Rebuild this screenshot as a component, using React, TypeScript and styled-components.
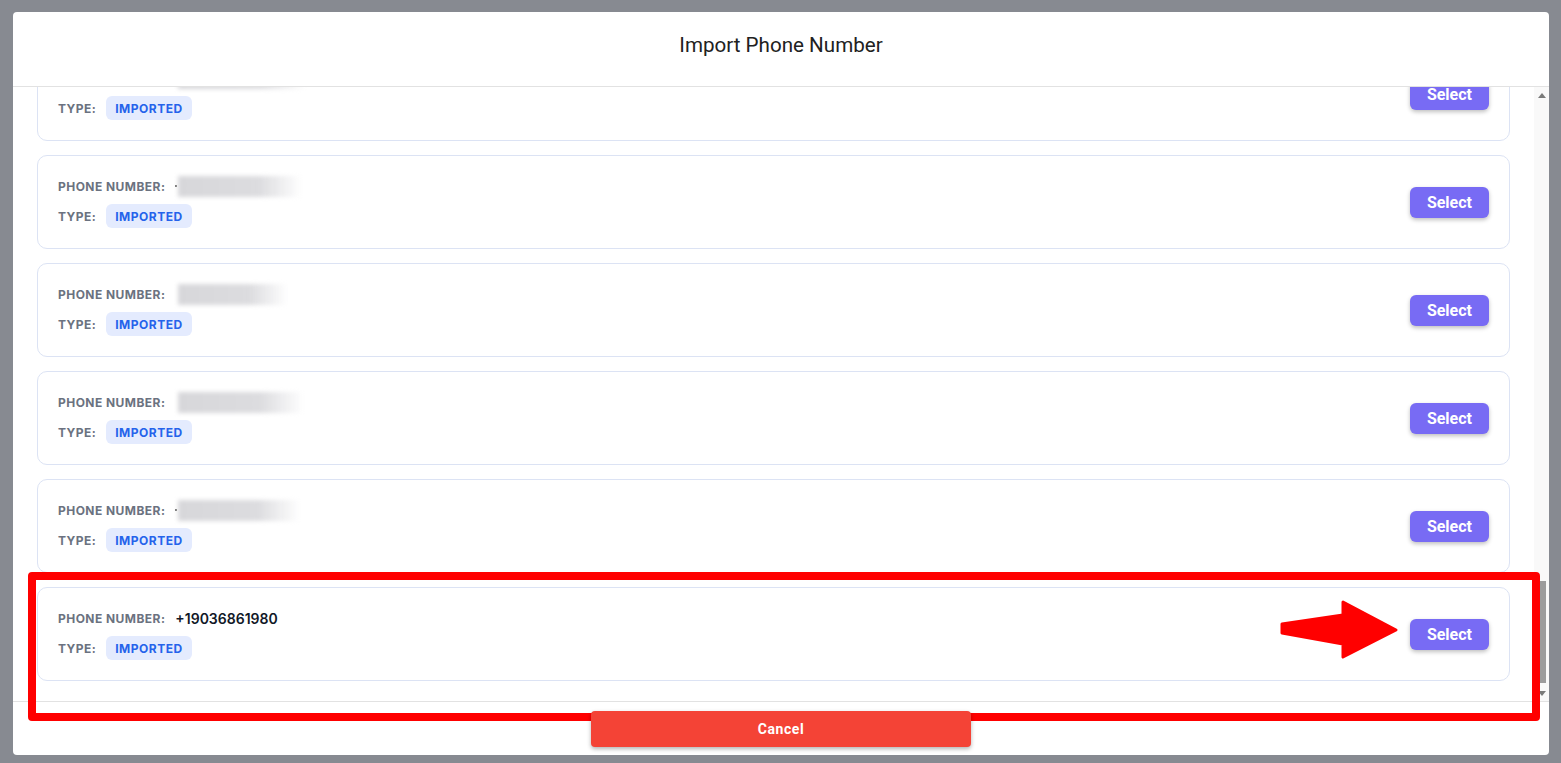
import React, { useLayoutEffect, useRef } from "react";
import styled, { createGlobalStyle } from "styled-components";

type PhoneItem = {
  id: number;
  number?: string;
  blurWidth: number;
};

const blurWidths = [124, 112, 128, 123, 118, 126, 110, 121];

const items: PhoneItem[] = Array.from({ length: 32 }, (_, i) => ({
  id: i,
  blurWidth: blurWidths[i % blurWidths.length],
}));
items[items.length - 5] = { id: 95, blurWidth: 124 };
items[items.length - 4] = { id: 96, blurWidth: 110 };
items[items.length - 3] = { id: 97, blurWidth: 126 };
items[items.length - 2] = { id: 98, blurWidth: 122 };
items[items.length - 1] = { id: 99, number: "+19036861980", blurWidth: 0 };

const GlobalStyle = createGlobalStyle`
  html, body {
    margin: 0;
    background: #878a91;
  }
  body {
    box-sizing: border-box;
    height: 763px;
    padding: 12px 12px 8px 13px;
    overflow: hidden;
    font-family: Roboto, "Liberation Sans", Arial, sans-serif;
  }
  * {
    box-sizing: border-box;
  }
`;

const Modal = styled.div`
  position: relative;
  height: 743px;
  display: flex;
  flex-direction: column;
  background: #ffffff;
  border-radius: 4px;
`;

const Header = styled.div`
  flex: 0 0 75px;
  display: flex;
  align-items: center;
  justify-content: center;
  padding-bottom: 8px;
  border-bottom: 1px solid #e2e2e2;
  h2 {
    margin: 0;
    font-family: Roboto, "Liberation Sans", sans-serif;
    font-size: 20.6px;
    font-weight: 400;
    color: #212121;
  }
`;

const Body = styled.div`
  flex: 1;
  min-height: 0;
  display: flex;
`;

const List = styled.div`
  flex: 1;
  overflow-y: scroll;
  padding: 20px 24px;
  display: flex;
  flex-direction: column;
  gap: 14px;
  scrollbar-width: none;
  &::-webkit-scrollbar {
    display: none;
  }
`;

const ScrollBar = styled.div`
  flex: 0 0 15px;
  display: flex;
  flex-direction: column;
  background: #f9f9f9;
`;

const ScrollArrow = styled.div<{ $dir: "up" | "down" }>`
  flex: 0 0 15px;
  display: flex;
  align-items: center;
  justify-content: center;
  &::after {
    content: "";
    width: 0;
    height: 0;
    border-left: 4px solid transparent;
    border-right: 4px solid transparent;
    ${(p) =>
      p.$dir === "up"
        ? "border-bottom: 5px solid #7a7a7a; margin-top: 1px;"
        : "border-top: 5px solid #7a7a7a;"}
  }
`;

const Track = styled.div`
  flex: 1;
  display: flex;
  flex-direction: column;
  justify-content: flex-end;
  padding: 0 3px 3px 2px;
`;

const Thumb = styled.div`
  height: 102px;
  background: #9c9c9c;
`;

const Card = styled.div`
  flex: 0 0 auto;
  display: flex;
  align-items: center;
  justify-content: space-between;
  padding: 20px;
  border: 1px solid #dce3f4;
  border-radius: 10px;
  background: #ffffff;
`;

const Info = styled.div`
  display: flex;
  flex-direction: column;
  gap: 8px;
  font-family: Inter, "Noto Sans", sans-serif;
`;

const Row = styled.div<{ $h: number }>`
  display: flex;
  align-items: center;
  gap: 10px;
  height: ${(p) => p.$h}px;
`;

const Label = styled.span`
  font-size: 12px;
  font-weight: 700;
  letter-spacing: 0.45px;
  text-transform: uppercase;
  color: #6b7280;
`;

const Value = styled.span`
  font-size: 14px;
  font-weight: 600;
  color: #111827;
`;

const Hidden = styled.span<{ $w: number; $dot: boolean }>`
  display: inline-flex;
  align-items: center;
  gap: 1px;
  height: 20px;
  &::before {
    content: "";
    width: 2px;
    height: 2px;
    border-radius: 50%;
    background: ${(p) => (p.$dot ? "#444" : "transparent")};
  }
  &::after {
    content: "";
    width: ${(p) => p.$w}px;
    height: 21px;
    background: linear-gradient(90deg, #d7d7da 0%, #dcdcdf 65%, rgba(255, 255, 255, 0) 100%);
    filter: blur(2px);
  }
`;

const Badge = styled.span`
  display: inline-flex;
  align-items: center;
  height: 24px;
  padding: 0 9px;
  border-radius: 6px;
  background: #e4ebfe;
  color: #2563eb;
  font-size: 12px;
  font-weight: 700;
  letter-spacing: 0.5px;
`;

const SelectButton = styled.button`
  height: 31px;
  padding: 0 17px;
  border: none;
  border-radius: 6px;
  background: #786bf4;
  color: #ffffff;
  font-family: Roboto, "Liberation Sans", sans-serif;
  font-size: 16px;
  font-weight: 700;
  box-shadow: 0 2px 4px rgba(0, 0, 0, 0.25);
  cursor: pointer;
`;

const Footer = styled.div`
  flex: 0 0 54px;
  display: flex;
  justify-content: center;
  padding: 9px 0 8px;
  border-top: 1px solid #e2e2e2;
`;

const CancelButton = styled.button`
  position: relative;
  z-index: 2;
  width: 380px;
  height: 36px;
  border: none;
  border-radius: 4px;
  background: #f44336;
  color: #ffffff;
  font-family: Roboto, "Liberation Sans", sans-serif;
  font-size: 14px;
  font-weight: 700;
  letter-spacing: 0.6px;
  box-shadow: 0 2px 4px rgba(0, 0, 0, 0.3);
  cursor: pointer;
`;

const Highlight = styled.div`
  position: absolute;
  left: 15px;
  top: 560px;
  width: 1512px;
  height: 149px;
  border: 8px solid #ff0000;
  border-radius: 4px;
  z-index: 1;
  pointer-events: none;
`;

const Arrow = styled.svg`
  position: absolute;
  left: 1267px;
  top: 588px;
  z-index: 1;
  pointer-events: none;
`;

const App: React.FC = () => {
  const listRef = useRef<HTMLDivElement>(null);

  useLayoutEffect(() => {
    const el = listRef.current;
    if (el) el.scrollTop = el.scrollHeight;
  }, []);

  return (
    <>
      <GlobalStyle />
      <Modal>
        <Header>
          <h2>Import Phone Number</h2>
        </Header>
        <Body>
          <List ref={listRef}>
            {items.map((item, i) => (
              <Card key={item.id}>
                <Info>
                  <Row $h={20}>
                    <Label>Phone Number:</Label>
                    {item.number ? (
                      <Value>{item.number}</Value>
                    ) : (
                      <Hidden $w={item.blurWidth} $dot={i % 3 === 0} />
                    )}
                  </Row>
                  <Row $h={24}>
                    <Label>Type:</Label>
                    <Badge>IMPORTED</Badge>
                  </Row>
                </Info>
                <SelectButton>Select</SelectButton>
              </Card>
            ))}
          </List>
          <ScrollBar>
            <ScrollArrow $dir="up" />
            <Track>
              <Thumb />
            </Track>
            <ScrollArrow $dir="down" />
          </ScrollBar>
        </Body>
        <Footer>
          <CancelButton>Cancel</CancelButton>
        </Footer>
        <Highlight />
        <Arrow width="124" height="64" viewBox="0 0 124 64">
          <polygon
            points="15,36 76,27 76,14 129,42 76,69 76,56 15,45"
            transform="translate(-13,-12)"
            fill="#ff0000"
            stroke="#ff0000"
            strokeWidth="3"
            strokeLinejoin="round"
          />
        </Arrow>
      </Modal>
    </>
  );
};

export default App;
